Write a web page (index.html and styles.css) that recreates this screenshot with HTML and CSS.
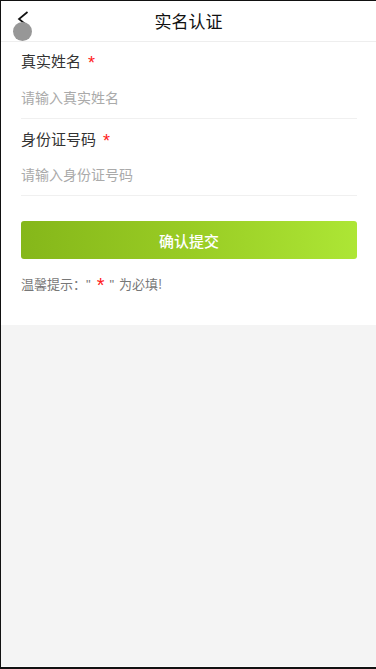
FILE: index.html
```html
<!DOCTYPE html>
<html lang="zh">
<head>
<meta charset="utf-8">
<link rel="stylesheet" href="styles.css">
</head>
<body>
<div class="screen">
  <header class="header">
    <span class="back">
      <svg width="12" height="16" viewBox="0 0 12 16"><path d="M10.5 1 L2 8 L10.5 15" fill="none" stroke="#111" stroke-width="1.7"/></svg>
    </span>
    <h1 class="title">实名认证</h1>
    <span class="dot"></span>
  </header>
  <main class="card">
    <div class="field">
      <div class="label">真实姓名<span class="star">*</span></div>
      <div class="input">请输入真实姓名</div>
    </div>
    <div class="field">
      <div class="label">身份证号码<span class="star">*</span></div>
      <div class="input">请输入身份证号码</div>
    </div>
    <button class="submit">确认提交</button>
    <p class="tip">温馨提示：<span class="q">"</span><span class="star">*</span><span class="q q2">"</span>为必填!</p>
  </main>
</div>
</body>
</html>
```
FILE: styles.css
```css
html, body {
  margin: 0;
  padding: 0;
  background: #111;
}
body {
  width: 376px;
  height: 669px;
  overflow: hidden;
  font-family: "Noto Sans CJK SC", "Liberation Sans", sans-serif;
}
.screen {
  margin: 1px 0 0 1px;
  width: 375px;
  height: 665px;
  background: #f4f4f4;
  border-bottom: 1px solid #fafafa;
  display: flex;
  flex-direction: column;
}
.header {
  position: relative;
  height: 40px;
  background: #fff;
  border-bottom: 1px solid #eee;
  display: flex;
  align-items: center;
  justify-content: center;
}
.title {
  margin: 0;
  font-size: 17px;
  font-weight: normal;
  color: #111;
  line-height: 40px;
}
.back {
  position: absolute;
  left: 16px;
  top: 10px;
  width: 12px;
  height: 16px;
}
.back svg { display: block; }
.dot {
  position: absolute;
  left: 12px;
  top: 21px;
  width: 19px;
  height: 19px;
  border-radius: 50%;
  background: #979797;
}
.card {
  background: #fff;
  padding: 0 19px 0 20px;
  height: 283px;
  box-sizing: border-box;
}
.field {
  border-bottom: 1px solid #f0f0f0;
  display: flex;
  flex-direction: column;
}
.label {
  font-size: 15px;
  color: #333;
  height: 20px;
  line-height: 20px;
  margin-top: 9px;
  display: flex;
  align-items: center;
}
.label .star {
  margin-left: 7px;
}
.star {
  color: #ff1a1a;
  font-size: 18px;
  font-family: "Liberation Sans", sans-serif;
  position: relative;
  top: 2px;
}
.input {
  font-size: 14px;
  color: #aaa;
  height: 20px;
  line-height: 20px;
  margin-top: 16px;
  margin-bottom: 11px;
}
.field + .field .label { margin-top: 10px; }
.field + .field .input { margin-top: 15px; }
.field + .field .input { margin-bottom: 11px; }
.submit {
  display: block;
  width: 100%;
  height: 38px;
  margin-top: 25px;
  border: none;
  border-radius: 3px;
  background: linear-gradient(90deg, #85b71a 0%, #99cc24 50%, #ade635 100%);
  color: #fff;
  font-size: 15px;
  font-weight: 500;
  font-family: "Noto Sans CJK SC", sans-serif;
  padding: 0;
}
.tip {
  margin: 13px 0 0;
  font-size: 13px;
  color: #777;
  line-height: 20px;
}
.tip .q {
  font-family: "Liberation Sans", sans-serif;
  margin-right: 6px;
}
.tip .q.q2 {
  margin-right: 5px;
  margin-left: 5px;
}
.tip .star {
  font-size: 20px;
  top: 3px;
}
```
